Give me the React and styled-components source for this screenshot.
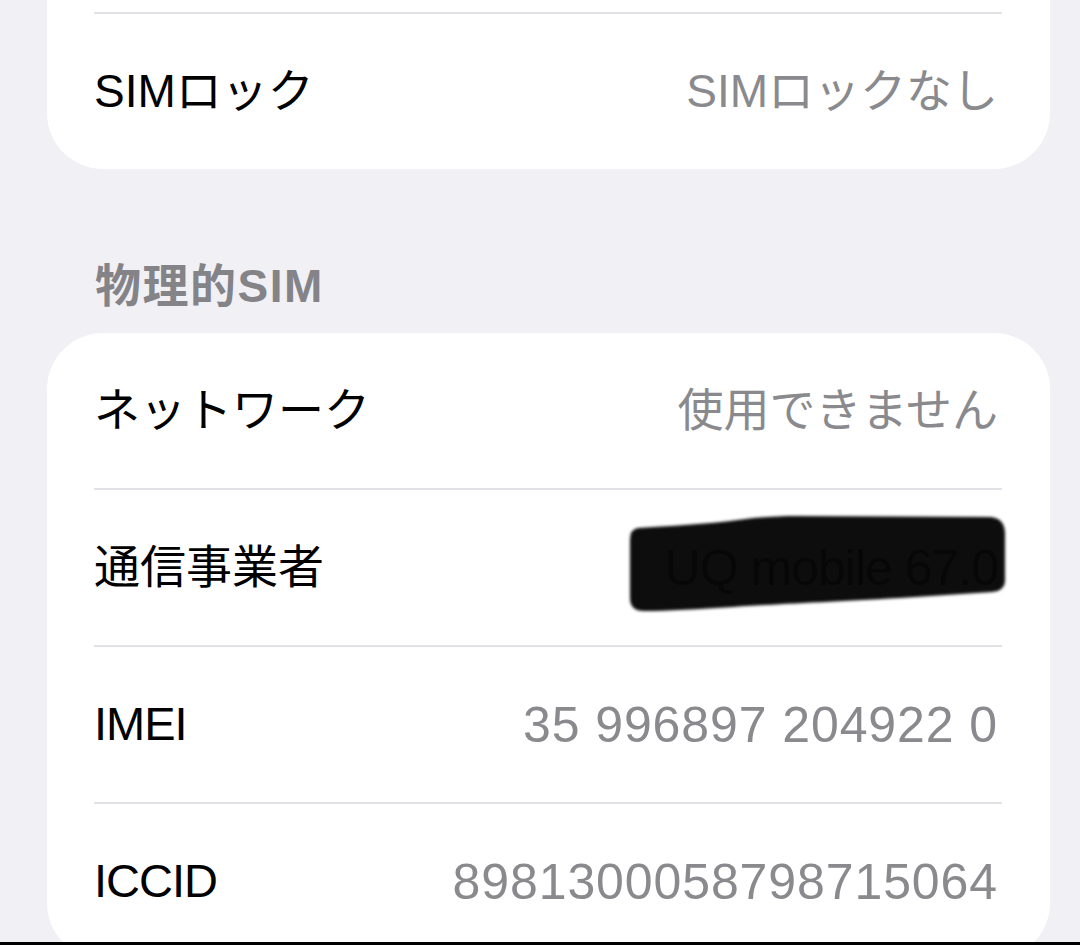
import React from "react";
import styled, { createGlobalStyle } from "styled-components";

const Global = createGlobalStyle`
  html, body { margin: 0; padding: 0; background: #f0f0f5; }
  body { font-family: "Liberation Sans", "Noto Sans CJK JP", sans-serif; }
`;

const Frame = styled.div`
  width: 1080px;
  height: 945px;
  box-sizing: border-box;
  overflow: hidden;
  background: #f0f0f5;
  border-bottom: 3px solid #000;
  display: flex;
  flex-direction: column;
  padding: 0 30px 0 47px;
`;

const Card = styled.div`
  background: #ffffff;
  border-radius: ${(p) => (p.$cutTop ? "0 0 56px 56px" : "56px")};
  padding: ${(p) => (p.$cutTop ? "12px 48px 0 47px" : "0 48px 0 47px")};
  display: flex;
  flex-direction: column;
  flex-shrink: 0;
  width: 1003px;
  box-sizing: border-box;
`;

const Row = styled.div`
  height: 155px;
  display: flex;
  align-items: center;
  justify-content: space-between;
  border-top: ${(p) => (p.$divider ? "2.5px solid #e2e2e6" : "none")};
  padding-right: 4px;
`;

const Label = styled.span`
  font-size: ${(p) => (p.$latin ? "47px" : "46px")};
  color: #000;
  line-height: 1.2;
  letter-spacing: ${(p) => (p.$latin ? "-1px" : "0")};
`;

const Value = styled.span`
  position: relative;
  font-size: ${(p) => p.$size || "46px"};
  letter-spacing: ${(p) => p.$tracking || "0"};
  color: #8a8a8e;
  line-height: 1.2;
  white-space: nowrap;
`;

const Header = styled.div`
  margin: 87px 0 17px 48px;
  height: 60px;
  line-height: 60px;
  font-size: 46px;
  font-weight: 700;
  letter-spacing: 1.5px;
  color: #838388;
`;

const Scribble = styled.svg`
  position: absolute;
  left: -37px;
  top: -24px;
  width: 380px;
  height: 100px;
  overflow: visible;
  pointer-events: none;
`;

const Redaction = () => (
  <Scribble viewBox="0 0 380 100">
    <defs>
      <filter id="soft" x="-5%" y="-10%" width="110%" height="120%">
        <feGaussianBlur stdDeviation="1.6" />
      </filter>
    </defs>
    <path
      d="M 10 14 C 40 12, 80 10, 110 6 C 130 3, 150 2, 170 2 L 362 3 Q 377 4 377 20 L 377 66 Q 377 77 364 78 L 272 84 C 200 88, 150 90, 105 93 C 70 95, 40 97, 16 97 Q 2 97 2 84 L 2 26 Q 2 15 10 14 Z"
      fill="#000"
      fillOpacity="0.95"
      filter="url(#soft)"
    />
  </Scribble>
);

export default function App() {
  return (
    <>
      <Global />
      <Frame>
        <Card $cutTop>
          <Row $divider>
            <Label>SIMロック</Label>
            <Value>SIMロックなし</Value>
          </Row>
        </Card>

        <Header>物理的SIM</Header>

        <Card>
          <Row>
            <Label>ネットワーク</Label>
            <Value>使用できません</Value>
          </Row>
          <Row $divider>
            <Label>通信事業者</Label>
            <Value $size="50px" $tracking="-1px">
              UQ mobile 67.0
              <Redaction />
            </Value>
          </Row>
          <Row $divider>
            <Label $latin>IMEI</Label>
            <Value $size="50px" $tracking="0.9px">35 996897 204922 0</Value>
          </Row>
          <Row $divider>
            <Label $latin>ICCID</Label>
            <Value $size="50px" $tracking="0.9px">8981300058798715064</Value>
          </Row>
        </Card>
      </Frame>
    </>
  );
}
